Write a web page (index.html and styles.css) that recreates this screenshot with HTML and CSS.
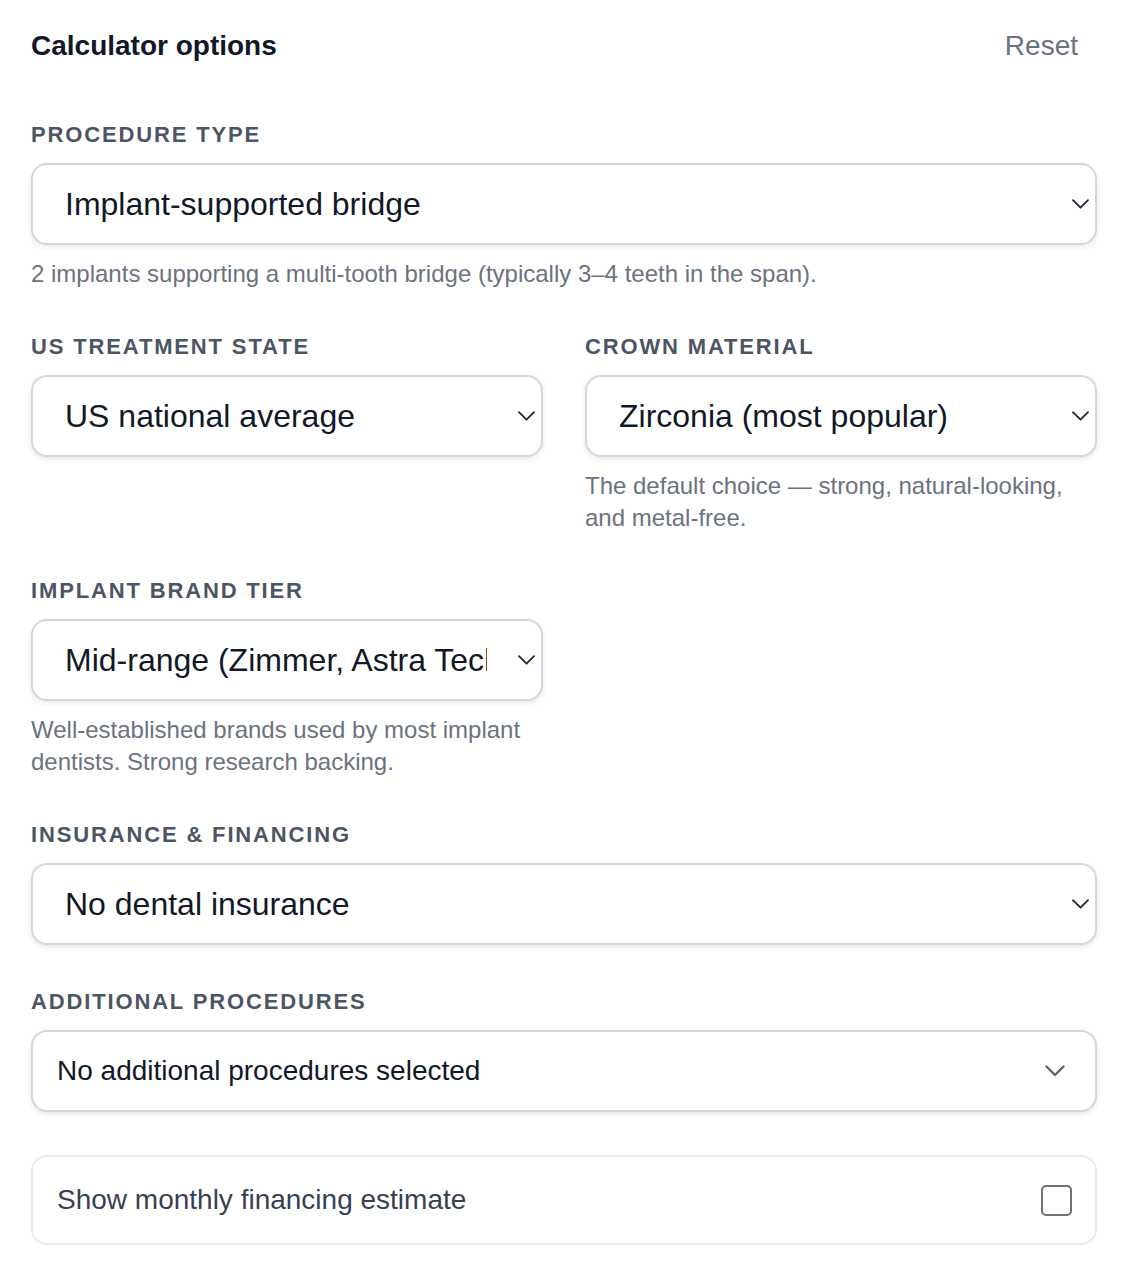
FILE: index.html
```html
<!DOCTYPE html>
<html lang="en">
<head>
<meta charset="utf-8">
<title>Calculator options</title>
<link rel="stylesheet" href="styles.css">
</head>
<body>
<div class="panel">
  <header class="head">
    <h2 class="title">Calculator options</h2>
    <button class="reset" type="button">Reset</button>
  </header>

  <div class="form">
    <div class="field">
      <div class="label">PROCEDURE TYPE</div>
      <div class="select">
        <span class="value">Implant-supported bridge</span>
        <svg class="chev" width="17" height="10" viewBox="0 0 17 10"><path d="M1 1.2 L8.5 8.7 L16 1.2" fill="none" stroke="#1f2937" stroke-width="1.8" stroke-linecap="round" stroke-linejoin="round"/></svg>
      </div>
      <p class="help">2 implants supporting a multi-tooth bridge (typically 3–4 teeth in the span).</p>
    </div>

    <div class="row">
      <div class="field">
        <div class="label">US TREATMENT STATE</div>
        <div class="select">
          <span class="value">US national average</span>
          <svg class="chev" width="17" height="10" viewBox="0 0 17 10"><path d="M1 1.2 L8.5 8.7 L16 1.2" fill="none" stroke="#1f2937" stroke-width="1.8" stroke-linecap="round" stroke-linejoin="round"/></svg>
        </div>
      </div>
      <div class="field">
        <div class="label">CROWN MATERIAL</div>
        <div class="select">
          <span class="value">Zirconia (most popular)</span>
          <svg class="chev" width="17" height="10" viewBox="0 0 17 10"><path d="M1 1.2 L8.5 8.7 L16 1.2" fill="none" stroke="#1f2937" stroke-width="1.8" stroke-linecap="round" stroke-linejoin="round"/></svg>
        </div>
        <p class="help">The default choice — strong, natural-looking, and metal-free.</p>
      </div>
    </div>

    <div class="row">
      <div class="field">
        <div class="label">IMPLANT BRAND TIER</div>
        <div class="select">
          <span class="value">Mid-range (Zimmer, Astra Tech)</span>
          <svg class="chev" width="17" height="10" viewBox="0 0 17 10"><path d="M1 1.2 L8.5 8.7 L16 1.2" fill="none" stroke="#1f2937" stroke-width="1.8" stroke-linecap="round" stroke-linejoin="round"/></svg>
        </div>
        <p class="help">Well-established brands used by most implant dentists. Strong research backing.</p>
      </div>
      <div></div>
    </div>

    <div class="field">
      <div class="label">INSURANCE &amp; FINANCING</div>
      <div class="select">
        <span class="value">No dental insurance</span>
        <svg class="chev" width="17" height="10" viewBox="0 0 17 10"><path d="M1 1.2 L8.5 8.7 L16 1.2" fill="none" stroke="#1f2937" stroke-width="1.8" stroke-linecap="round" stroke-linejoin="round"/></svg>
      </div>
    </div>

    <div class="field">
      <div class="label">ADDITIONAL PROCEDURES</div>
      <div class="multi">
        <span class="multi-value">No additional procedures selected</span>
        <svg class="multi-chev" width="20" height="12" viewBox="0 0 20 12"><path d="M1.5 1.5 L10 10 L18.5 1.5" fill="none" stroke="#5b6277" stroke-width="2.4" stroke-linecap="round" stroke-linejoin="round"/></svg>
      </div>
    </div>

    <label class="toggle">
      <span class="toggle-text">Show monthly financing estimate</span>
      <span class="checkbox"></span>
    </label>
  </div>
</div>
</body>
</html>
```

FILE: styles.css
```css
* {
  box-sizing: border-box;
}

html, body {
  margin: 0;
  background: #ffffff;
}

body {
  font-family: "Liberation Sans", Arial, Helvetica, sans-serif;
  color: #111827;
}

.panel {
  padding: 26px 37px 40px 31px;
}

.head {
  display: flex;
  align-items: center;
  justify-content: space-between;
  height: 40px;
  margin-bottom: 53px;
}

.title {
  margin: 0;
  font-size: 28px;
  line-height: 40px;
  font-weight: 700;
  color: #111827;
}

.reset {
  font-family: inherit;
  font-size: 28px;
  line-height: 40px;
  color: #6b7280;
  background: none;
  border: 0;
  padding: 0;
  margin-right: 19px;
  cursor: pointer;
}

.form {
  display: flex;
  flex-direction: column;
  gap: 41px;
}

.row {
  display: grid;
  grid-template-columns: 1fr 1fr;
  column-gap: 42px;
}

.field {
  display: flex;
  flex-direction: column;
  min-width: 0;
}

.label {
  font-size: 22px;
  line-height: 32px;
  font-weight: 700;
  letter-spacing: 1.85px;
  color: #4b5563;
  margin-bottom: 12px;
}

.select {
  display: flex;
  align-items: center;
  height: 82px;
  border: 2px solid #d3d6de;
  border-radius: 16px;
  background: #ffffff;
  box-shadow: 0 2px 5px rgba(17, 24, 39, 0.10);
  padding: 0 6px 0 32px;
}

.value {
  flex: 1;
  min-width: 0;
  overflow: hidden;
  white-space: nowrap;
  font-size: 32px;
  line-height: 40px;
  color: #111827;
  margin-right: 31px;
}

.chev {
  flex: none;
  display: block;
}

.help {
  margin: 13px 0 0;
  font-size: 24px;
  line-height: 32px;
  color: #6b7280;
}

.multi {
  display: flex;
  align-items: center;
  justify-content: space-between;
  height: 82px;
  border: 2px solid #d3d6de;
  border-radius: 16px;
  background: #ffffff;
  box-shadow: 0 2px 5px rgba(17, 24, 39, 0.10);
  padding: 0 30px 0 24px;
}

.multi-value {
  font-size: 28px;
  line-height: 40px;
  color: #111827;
}

.multi-chev {
  display: block;
  flex: none;
}

.toggle {
  display: flex;
  align-items: center;
  justify-content: space-between;
  height: 90px;
  margin-top: 2px;
  border: 2px solid #e7e9ee;
  border-radius: 16px;
  background: #ffffff;
  padding: 0 23px 0 24px;
}

.toggle-text {
  font-size: 28px;
  line-height: 40px;
  color: #374151;
}

.checkbox {
  width: 31px;
  height: 31px;
  border: 2px solid #6f7175;
  border-radius: 5px;
  background: #ffffff;
  flex: none;
}
```
